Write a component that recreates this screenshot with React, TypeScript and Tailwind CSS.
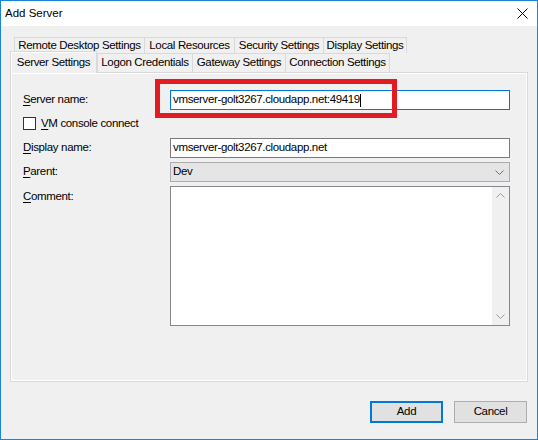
import React from 'react'
import clsx from 'clsx'

const ROW_ONE = [
  { label: 'Remote Desktop Settings', w: 'w-[131px]' },
  { label: 'Local Resources', w: 'w-[91px]' },
  { label: 'Security Settings', w: 'w-[90px]' },
  { label: 'Display Settings', w: 'w-[84px]' },
]

const ROW_TWO = [
  { label: 'Logon Credentials', w: 'w-[96px]' },
  { label: 'Gateway Settings', w: 'w-[94px]' },
  { label: 'Connection Settings', w: 'w-[105px]' },
]

function Tab({ label, w, className }: { label: string; w: string; className?: string }) {
  return (
    <div
      className={clsx(
        'flex items-center justify-center border border-[#d9d9d9] -ml-px first:ml-0 bg-[#f0f0f0] whitespace-nowrap',
        w,
        className
      )}
    >
      {label}
    </div>
  )
}

function Label({ mnemonic, rest }: { mnemonic: string; rest: string }) {
  return (
    <span className="w-[147px] shrink-0">
      <u className="underline-offset-2">{mnemonic}</u>
      {rest}
    </span>
  )
}

function Chevron({ up, color = '#9a9a9a' }: { up?: boolean; color?: string }) {
  return (
    <svg width="9" height="5" viewBox="0 0 9 5" className={up ? 'rotate-180' : ''}>
      <path d="M0.5 0.5 L4.5 4.5 L8.5 0.5" fill="none" stroke={color} strokeWidth="1" />
    </svg>
  )
}

export default function App() {
  return (
    <div className="w-[538px] h-[440px] flex flex-col border border-[#1883d7] bg-[#f0f0f0] text-[11.5px] tracking-[-0.35px] text-black font-['Liberation_Sans',Arial,sans-serif]">
      {/* title bar */}
      <div className="h-[25px] shrink-0 bg-white flex items-center justify-between pl-[4px] pr-[9px]">
        <span className="text-[11.5px] tracking-normal">Add Server</span>
        <svg width="11" height="11" viewBox="0 0 11 11">
          <path d="M0.5 0.5 L10.5 10.5 M10.5 0.5 L0.5 10.5" stroke="#000" strokeWidth="1" />
        </svg>
      </div>

      <div className="flex flex-col pt-[11px] px-[9px]">
        {/* tab strip, two rows */}
        <div className="flex h-[16px] ml-[4px]">
          {ROW_ONE.map((t) => (
            <Tab key={t.label} {...t} className="border-b-0" />
          ))}
        </div>
        <div className="flex items-end h-[19px]">
          <div className="relative z-10 w-[87px] h-[22px] -mb-px flex items-center justify-center border border-b-0 border-[#d9d9d9] bg-[#f0f0f0] shadow-[inset_1px_1px_0_#fff]">
            Server Settings
          </div>
          <div className="flex h-[19px]">
            {ROW_TWO.map((t) => (
              <Tab key={t.label} {...t} className="border-b-0" />
            ))}
          </div>
        </div>

        {/* tab page */}
        <div className="w-[518px] h-[310px] flex flex-col border border-[#d9d9d9] shadow-[inset_1px_1px_0_#fff,inset_-1px_-1px_0_#fff] pt-[17px] pl-[12px] pr-[17px]">
          <div className="flex items-center h-[20px]">
            <Label mnemonic="S" rest="erver name:" />
            <div className="relative flex-1 h-[20px]">
              <div className="h-full flex items-center border border-[#0078d7] bg-white pl-[2px]">
                <span>vmserver-golt3267.cloudapp.net:49419</span>
                <span className="w-px h-[13px] bg-black" />
              </div>
              <div className="absolute -left-[15px] -top-[11px] w-[242px] h-[39px] border-[5px] border-[#e31b23]" />
            </div>
          </div>

          <div className="flex items-center h-[27px] gap-[5px]">
            <span className="w-[13px] h-[13px] border border-[#333] bg-white" />
            <span>
              <u className="underline-offset-2">V</u>M console connect
            </span>
          </div>

          <div className="flex items-center h-[20px] mt-px">
            <Label mnemonic="D" rest="isplay name:" />
            <div className="flex-1 h-full flex items-center border border-[#7a7a7a] bg-white pl-[2px]">
              vmserver-golt3267.cloudapp.net
            </div>
          </div>

          <div className="flex items-center h-[20px] mt-[4px]">
            <Label mnemonic="P" rest="arent:" />
            <div className="flex-1 h-full flex items-center justify-between border border-[#acacac] bg-[#e5e5e5] pl-[2px] pr-[5px]">
              <span>Dev</span>
              <Chevron color="#707070" />
            </div>
          </div>

          <div className="flex items-start h-[140px] mt-[4px]">
            <span className="w-[147px] shrink-0 pt-[2px]">
              <u className="underline-offset-2">C</u>omment:
            </span>
            <div className="flex-1 h-full flex justify-end border border-[#828790] bg-white">
              <div className="w-[17px] h-full bg-[#f0f0f0] flex flex-col items-center justify-between py-[6px]">
                <Chevron up />
                <Chevron />
              </div>
            </div>
          </div>
        </div>
      </div>

      {/* dialog buttons */}
      <div className="flex justify-end gap-[11px] pt-[19px] pr-[10px]">
        <button className="w-[73px] h-[22px] border-2 border-[#0078d7] bg-[#e1e1e1]">Add</button>
        <button className="w-[73px] h-[22px] border border-[#adadad] bg-[#e1e1e1]">Cancel</button>
      </div>
    </div>
  )
}
